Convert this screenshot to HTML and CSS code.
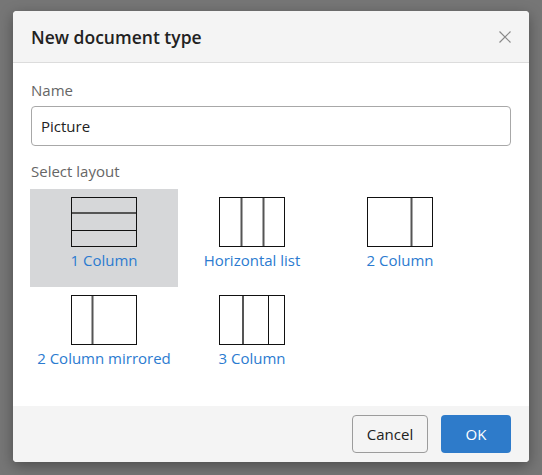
FILE: index.html
```html
<!DOCTYPE html>
<html lang="en">
<head>
  <meta charset="UTF-8">
  <title>New document type</title>
  <link rel="stylesheet" href="styles.css">
</head>
<body>

<div class="dialog">
  <div class="dialog-header">
    <h2>New document type</h2>
    <button class="close-button" aria-label="Close">
      <svg width="12" height="12" viewBox="0 0 12 12">
        <path d="M0.5 0.5 L11.5 11.5 M11.5 0.5 L0.5 11.5" stroke="#8a8a8a" stroke-width="1.2" fill="none"/>
      </svg>
    </button>
  </div>

  <div class="dialog-body">
    <label class="field-label" for="docName">Name</label>
    <input id="docName" class="text-input" type="text" value="Picture">

    <div class="field-label layout-label">Select layout</div>
    <div class="layout-list">
      <!-- 1 Column -->
      <div class="layout-item selected">
        <svg class="layout-icon" width="66" height="50" viewBox="0 0 66 50">
          <rect x="0.5" y="0.5" width="65" height="49" fill="none" stroke="#111"/>
          <line x1="1" y1="16" x2="65" y2="16" stroke="#555" stroke-width="2"/>
          <line x1="1" y1="33.5" x2="65" y2="33.5" stroke="#111"/>
        </svg>
        <span>1 Column</span>
      </div>
      <!-- Horizontal list -->
      <div class="layout-item">
        <svg class="layout-icon" width="66" height="50" viewBox="0 0 66 50">
          <rect x="0.5" y="0.5" width="65" height="49" fill="#fff" stroke="#111"/>
          <line x1="22.5" y1="1" x2="22.5" y2="49" stroke="#555" stroke-width="2"/>
          <line x1="44.5" y1="1" x2="44.5" y2="49" stroke="#555" stroke-width="2"/>
        </svg>
        <span>Horizontal list</span>
      </div>
      <!-- 2 Column -->
      <div class="layout-item">
        <svg class="layout-icon" width="66" height="50" viewBox="0 0 66 50">
          <rect x="0.5" y="0.5" width="65" height="49" fill="#fff" stroke="#111"/>
          <line x1="44.5" y1="1" x2="44.5" y2="49" stroke="#555" stroke-width="2"/>
        </svg>
        <span>2 Column</span>
      </div>
      <!-- 2 Column mirrored -->
      <div class="layout-item">
        <svg class="layout-icon" width="66" height="50" viewBox="0 0 66 50">
          <rect x="0.5" y="0.5" width="65" height="49" fill="#fff" stroke="#111"/>
          <line x1="21.5" y1="1" x2="21.5" y2="49" stroke="#555" stroke-width="2"/>
        </svg>
        <span>2 Column mirrored</span>
      </div>
      <!-- 3 Column -->
      <div class="layout-item">
        <svg class="layout-icon" width="66" height="50" viewBox="0 0 66 50">
          <rect x="0.5" y="0.5" width="65" height="49" fill="#fff" stroke="#111"/>
          <line x1="24" y1="1" x2="24" y2="49" stroke="#555" stroke-width="2"/>
          <line x1="49.5" y1="1" x2="49.5" y2="49" stroke="#111"/>
        </svg>
        <span>3 Column</span>
      </div>
    </div>
  </div>

  <div class="dialog-footer">
    <button class="btn btn-cancel">Cancel</button>
    <button class="btn btn-ok">OK</button>
  </div>
</div>

</body>
</html>
```

FILE: styles.css
```css
body {
  margin: 0;
  height: 475px;
  background-color: #767676;
  font-family: "Open Sans", "Noto Sans", sans-serif;
  overflow: hidden;
}

.dialog {
  margin: 11px 13px;
  width: 516px;
  background-color: #fff;
  border-radius: 4px;
  overflow: hidden;
  box-shadow: 0 4px 14px rgba(0, 0, 0, 0.35);
}

.dialog-header {
  height: 51px;
  padding: 0 18px;
  display: flex;
  align-items: center;
  justify-content: space-between;
  background-color: #f4f4f4;
  border-bottom: 1px solid #dcdcdc;
}

.dialog-header h2 {
  margin: 0;
  font-size: 17.5px;
  font-weight: 600;
  color: #222;
}

.close-button {
  padding: 0;
  border: none;
  background: none;
  display: flex;
  cursor: pointer;
}

.dialog-body {
  padding: 17px 18px 21px;
}

.field-label {
  display: block;
  font-size: 15px;
  line-height: 20px;
  color: #666;
}

.text-input {
  display: block;
  box-sizing: border-box;
  width: 100%;
  height: 40px;
  margin-top: 6px;
  padding: 0 9px;
  border: 1px solid #a8a8a8;
  border-radius: 4px;
  font-family: inherit;
  font-size: 15px;
  color: #222;
}

.layout-label {
  margin-top: 15px;
}

.layout-list {
  display: flex;
  flex-wrap: wrap;
  margin-top: 8px;
  margin-left: -1px;
}

.layout-item {
  width: 148px;
  height: 98px;
  box-sizing: border-box;
  padding-top: 8px;
  display: flex;
  flex-direction: column;
  align-items: center;
  cursor: pointer;
}

.layout-item.selected {
  background-color: #d6d7d9;
}

.layout-icon {
  display: block;
}

.layout-item span {
  margin-top: 3px;
  font-size: 15px;
  line-height: 20px;
  color: #2b7bd0;
}

.dialog-footer {
  height: 56px;
  padding: 0 18px;
  display: flex;
  align-items: center;
  justify-content: flex-end;
  gap: 13px;
  background-color: #f4f4f4;
}

.btn {
  height: 38px;
  border-radius: 4px;
  font-family: inherit;
  font-size: 15px;
  cursor: pointer;
}

.btn-cancel {
  width: 76px;
  border: 1px solid #9c9c9c;
  background-color: #f4f4f4;
  color: #222;
}

.btn-ok {
  width: 70px;
  border: none;
  background-color: #2e7bca;
  color: #fff;
}
```
